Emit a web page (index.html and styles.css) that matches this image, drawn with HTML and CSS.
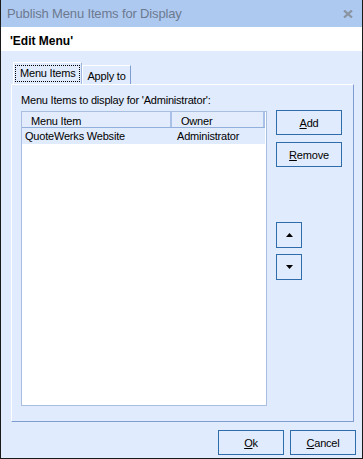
FILE: index.html
```html
<!DOCTYPE html>
<html>
<head>
<meta charset="utf-8">
<link rel="stylesheet" href="styles.css">
</head>
<body>
<div class="dialog">
  <div class="titlebar">
    <span class="title">Publish Menu Items for Display</span>
    <svg class="close" width="10" height="8" viewBox="0 0 10 8"><path d="M1 0.5 L9 7.5 M9 0.5 L1 7.5" stroke="#8a93a0" stroke-width="2.2"/></svg>
  </div>
  <div class="header">'Edit Menu'</div>
  <div class="main">
    <div class="tabs">
      <div class="tab active"><span class="focus">Menu Items</span></div>
      <div class="tab">Apply to</div>
    </div>
    <div class="panel">
      <div class="label">Menu Items to display for 'Administrator':</div>
      <div class="content">
        <div class="list">
          <div class="list-head">
            <div class="col c1">Menu Item</div>
            <div class="col c2">Owner</div>
          </div>
          <div class="row selected">
            <div class="cell c1">QuoteWerks Website</div>
            <div class="cell c2">Administrator</div>
          </div>
        </div>
        <div class="side">
          <button class="btn"><u>A</u>dd</button>
          <button class="btn"><u>R</u>emove</button>
          <div class="arrows">
            <button class="btn sq"><svg width="7" height="4" viewBox="0 0 7 4"><path d="M3.5 0 L7 4 L0 4 Z" fill="#000"/></svg></button>
            <button class="btn sq"><svg width="7" height="4" viewBox="0 0 7 4"><path d="M0 0 L7 0 L3.5 4 Z" fill="#000"/></svg></button>
          </div>
        </div>
      </div>
    </div>
    <div class="footer">
      <button class="btn"><u>O</u>k</button>
      <button class="btn"><u>C</u>ancel</button>
    </div>
  </div>
</div>
</body>
</html>
```

FILE: styles.css
```css
html, body {
  margin: 0;
  padding: 0;
  background: #e0ebfd;
}
body {
  font-family: "Liberation Sans", Arial, sans-serif;
  font-size: 11px;
  letter-spacing: -0.2px;
  color: #000;
}
.dialog {
  width: 363px;
  height: 459px;
  box-sizing: border-box;
  border: 1px solid #1a1a1a;
  border-top: none;
  display: flex;
  flex-direction: column;
  background: #e0ebfd;
}
.titlebar {
  height: 27px;
  background: #aec9f0;
  display: flex;
  align-items: center;
  justify-content: space-between;
  padding: 0 9px 1px 6px;
  box-sizing: border-box;
}
.title {
  font-size: 13px;
  letter-spacing: -0.15px;
  color: #6c798f;
}
.close {
  margin-top: 1px;
}
.header {
  height: 24px;
  background: #fff;
  font-weight: bold;
  font-size: 12px;
  letter-spacing: 0;
  padding: 7px 0 0 9px;
  box-sizing: border-box;
}
.main {
  flex: 1;
  display: flex;
  flex-direction: column;
  padding: 11px 8px 3px 10px;
}
.tabs {
  display: flex;
  align-items: flex-end;
  height: 22px;
  padding-left: 2px;
}
.tab {
  height: 19px;
  box-sizing: border-box;
  border-top: 1px solid #fff;
  border-left: 1px solid #fff;
  border-right: 1px solid #7f9dd0;
  padding: 3px 4px 0 4px;
  line-height: 14px;
}
.tab.active {
  height: 22px;
  padding: 2px 1px 0 1px;
  border-right: 1px solid #9fb7de;
}
.focus {
  display: block;
  border: 1px dotted #000;
  padding: 0 4px 0 4px;
  height: 17px;
  box-sizing: border-box;
  line-height: 15px;
}
.panel {
  height: 338px;
  box-sizing: border-box;
  border-top: 1px solid #fff;
  border-left: 1px solid #fff;
  border-right: 1px solid #7f9dd0;
  border-bottom: 1px solid #7f9dd0;
  padding: 9px 0 15px 9px;
  display: flex;
  flex-direction: column;
}
.label {
  height: 13px;
  line-height: 13px;
  margin-bottom: 4px;
}
.content {
  display: flex;
  flex: 1;
}
.list {
  width: 246px;
  box-sizing: border-box;
  border: 1px solid #a9bfe0;
  background: #fff;
  padding-right: 1px;
}
.list-head {
  display: flex;
  height: 16px;
  box-sizing: border-box;
  background: #e2ecfc;
  border-bottom: 1px solid #93afdb;
  line-height: 15px;
}
.col {
  box-sizing: border-box;
  height: 15px;
  padding-top: 2px;
}
.list-head .c1 {
  width: 150px;
  padding-left: 9px;
  border-right: 2px solid #a9c1e6;
}
.list-head .c2 {
  width: 93px;
  padding-left: 9px;
  border-right: 2px solid #a9c1e6;
}
.row {
  display: flex;
  height: 16px;
  line-height: 17px;
  width: 243px;
}
.row.selected {
  background: #e0ebfd;
}
.row .c1 {
  width: 152px;
  padding-left: 3px;
  box-sizing: border-box;
}
.row .c2 {
  padding-left: 3px;
}
.side {
  margin-left: 9px;
  margin-top: -1px;
  display: flex;
  flex-direction: column;
  align-items: flex-start;
}
.btn {
  font-family: "Liberation Sans", Arial, sans-serif;
  font-size: 11px;
  letter-spacing: -0.2px;
  color: #000;
  width: 66px;
  height: 25px;
  box-sizing: border-box;
  border: 1px solid #2f6cab;
  background: #e0ebfd;
  padding: 0;
  margin: 0 0 7px 0;
  display: flex;
  align-items: center;
  justify-content: center;
}
.btn u {
  text-decoration: underline;
}
.arrows {
  margin-top: 48px;
  display: flex;
  flex-direction: column;
}
.btn.sq {
  width: 26px;
  height: 26px;
  margin-bottom: 6px;
}
.footer {
  display: flex;
  justify-content: flex-end;
  gap: 6px;
  margin-top: 8px;
  margin-right: -2px;
}
.footer .btn {
  margin: 0;
}
```
